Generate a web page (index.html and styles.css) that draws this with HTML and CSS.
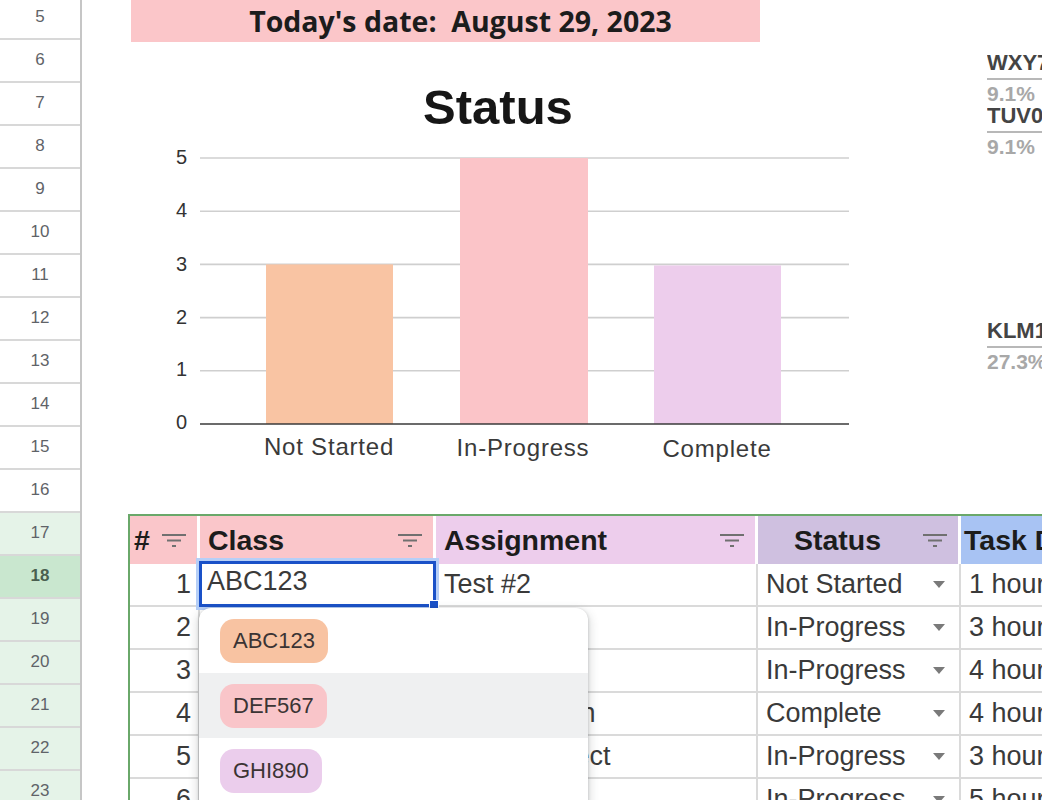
FILE: index.html
```html
<!DOCTYPE html>
<html lang="en">
<head>
<meta charset="utf-8">
<title>Assignment Tracker</title>
<link rel="stylesheet" href="styles.css">
</head>
<body>
<div class="app">
  <div class="rowhead">
    <div class="rh">5</div>
    <div class="rh">6</div>
    <div class="rh">7</div>
    <div class="rh">8</div>
    <div class="rh">9</div>
    <div class="rh">10</div>
    <div class="rh">11</div>
    <div class="rh">12</div>
    <div class="rh">13</div>
    <div class="rh">14</div>
    <div class="rh">15</div>
    <div class="rh">16</div>
    <div class="rh g">17</div>
    <div class="rh sel">18</div>
    <div class="rh g">19</div>
    <div class="rh g">20</div>
    <div class="rh g">21</div>
    <div class="rh g">22</div>
    <div class="rh g">23</div>
  </div>

  <main class="sheet">
    <section class="top">
      <div class="left">
        <div class="banner">Today's date:  August 29, 2023</div>
        <svg class="chart" viewBox="0 0 905 472" width="905" height="472">
          <text class="ct" x="416" y="82">Status</text>
          <g class="grid-lines">
            <line x1="118" y1="116" x2="767" y2="116"/>
            <line x1="118" y1="169.2" x2="767" y2="169.2"/>
            <line x1="118" y1="222.4" x2="767" y2="222.4"/>
            <line x1="118" y1="275.6" x2="767" y2="275.6"/>
            <line x1="118" y1="328.8" x2="767" y2="328.8"/>
          </g>
          <text class="yl" x="105" y="122">5</text>
          <text class="yl" x="105" y="175">4</text>
          <text class="yl" x="105" y="229">3</text>
          <text class="yl" x="105" y="282">2</text>
          <text class="yl" x="105" y="334">1</text>
          <text class="yl" x="105" y="387">0</text>
          <rect class="b-ns" x="184" y="222.4" width="127" height="159.6"/>
          <rect class="b-ip" x="378" y="116" width="128" height="266"/>
          <rect class="b-c" x="572" y="223.4" width="127" height="158.6"/>
          <line class="axis" x1="118" y1="382" x2="767" y2="382"/>
          <text class="xl" x="247" y="413">Not Started</text>
          <text class="xl" x="441" y="414">In-Progress</text>
          <text class="xl" x="635" y="415">Complete</text>
        </svg>
      </div>
      <div class="legend">
        <div class="lg-name">WXY789</div>
        <div class="lg-pct">9.1%</div>
        <div class="lg-name">TUV012</div>
        <div class="lg-pct">9.1%</div>
        <div class="lg-name far">KLM123</div>
        <div class="lg-pct">27.3%</div>
      </div>
    </section>

    <section class="tablewrap">
      <div class="grid">
        <div class="h h-pink"><span>#</span><svg class="filt" viewBox="0 0 24 14" width="24" height="14"><path d="M0 2h24M5 7.5h14M10 13h4"/></svg></div>
        <div class="h h-pink h-class"><span>Class</span><svg class="filt" viewBox="0 0 24 14" width="24" height="14"><path d="M0 2h24M5 7.5h14M10 13h4"/></svg></div>
        <div class="h h-lav h-class"><span>Assignment</span><svg class="filt" viewBox="0 0 24 14" width="24" height="14"><path d="M0 2h24M5 7.5h14M10 13h4"/></svg></div>
        <div class="h h-purp h-status"><span class="mid">Status</span><svg class="filt" viewBox="0 0 24 14" width="24" height="14"><path d="M0 2h24M5 7.5h14M10 13h4"/></svg></div>
        <div class="h h-blue h-task"><span>Task Duration</span></div>

        <div class="c num">1</div>
        <div class="c sel">ABC123</div>
        <div class="c">Test #2</div>
        <div class="c st">Not Started<i class="arrow"></i></div>
        <div class="c">1 hour</div>

        <div class="c num">2</div>
        <div class="c"></div>
        <div class="c">Quiz #3</div>
        <div class="c st">In-Progress<i class="arrow"></i></div>
        <div class="c">3 hours</div>

        <div class="c num">3</div>
        <div class="c"></div>
        <div class="c">Essay Draft</div>
        <div class="c st">In-Progress<i class="arrow"></i></div>
        <div class="c">4 hours</div>

        <div class="c num">4</div>
        <div class="c"></div>
        <div class="c">Presentation</div>
        <div class="c st">Complete<i class="arrow"></i></div>
        <div class="c">4 hours</div>

        <div class="c num">5</div>
        <div class="c"></div>
        <div class="c">Group Project</div>
        <div class="c st">In-Progress<i class="arrow"></i></div>
        <div class="c">3 hours</div>

        <div class="c num">6</div>
        <div class="c"></div>
        <div class="c">Lab Report</div>
        <div class="c st">In-Progress<i class="arrow"></i></div>
        <div class="c">5 hours</div>
      </div>

      <div class="dropdown">
        <div class="opt"><span class="chip chip-peach">ABC123</span></div>
        <div class="opt hl"><span class="chip chip-pink">DEF567</span></div>
        <div class="opt"><span class="chip chip-lav">GHI890</span></div>
      </div>
    </section>
  </main>
</div>
</body>
</html>
```

FILE: styles.css
```css
* { box-sizing: border-box; }
html, body { margin: 0; padding: 0; }
body {
  width: 1042px;
  height: 800px;
  overflow: hidden;
  background: #fff;
  font-family: "Liberation Sans", Arial, sans-serif;
}
.app { display: flex; height: 800px; }

/* row header */
.rowhead {
  width: 82px;
  flex: none;
  margin-top: -3px;
  border-right: 2px solid #c6c6c6;
  display: flex;
  flex-direction: column;
}
.rh {
  height: 43px;
  flex: none;
  border-bottom: 2px solid #d8d8d8;
  display: flex;
  align-items: center;
  justify-content: center;
  padding-bottom: 2px;
  font-size: 17px;
  color: #5f6368;
}
.rh.g { background: #e5f3e8; }
.rh.sel { background: #c9e7cf; color: #4a5f50; font-weight: bold; }

/* sheet */
.sheet { flex: 1; min-width: 0; overflow: hidden; position: relative; }
.top { display: flex; height: 514px; }
.left { width: 905px; flex: none; }
.banner {
  margin-left: 49px;
  width: 629px;
  height: 42px;
  background: #fbc6c9;
  display: flex;
  align-items: center;
  justify-content: center;
  padding-left: 30px;
  font-family: "Open Sans", "Liberation Sans", sans-serif;
  font-weight: 700;
  font-size: 28.5px;
  color: #1c1c1c;
  white-space: pre;
}
.chart { display: block; width: 905px; height: 472px; }
.chart text { font-family: "Liberation Sans", Arial, sans-serif; }
.ct { font-size: 49px; font-weight: bold; text-anchor: middle; fill: #161616; }
.grid-lines line { stroke: #cfcfcf; stroke-width: 1.6; }
.axis { stroke: #3a3a3a; stroke-width: 1.6; }
.yl { font-size: 20px; text-anchor: end; fill: #333; }
.xl { font-size: 24px; letter-spacing: 0.8px; text-anchor: middle; fill: #3a3a3a; }
.b-ns { fill: #f9c4a3; }
.b-ip { fill: #fbc4c8; }
.b-c { fill: #edcdec; }

/* pie legend (cut off) */
.legend {
  flex: 1;
  min-width: 0;
  overflow: hidden;
  padding-top: 52px;
  white-space: nowrap;
}
.lg-name {
  font-size: 22px;
  font-weight: bold;
  line-height: 22px;
  color: #444;
  padding-bottom: 4px;
  border-bottom: 2px solid #b8b8b8;
}
.lg-name.far { margin-top: 162px; }
.lg-pct {
  font-size: 21px;
  font-weight: bold;
  line-height: 22px;
  color: #a8a8a8;
  margin-top: 3px;
}

/* table */
.tablewrap { margin-left: 46px; position: relative; }
.grid {
  display: grid;
  grid-template-columns: 70px 236px 322px 203px 320px;
  width: max-content;
  border-top: 2px solid #6aa86a;
  border-left: 2px solid #6aa86a;
}
.h {
  height: 48px;
  display: flex;
  align-items: center;
  justify-content: space-between;
  padding: 0 11px 0 8px;
  border-right: 3px solid #fff;
  font-size: 28.5px;
  font-weight: bold;
  color: #1c1c1c;
  white-space: nowrap;
}
.h:first-child { padding-left: 4px; }
.h-pink { background: #fac6ca; }
.h-lav { background: #edcdec; }
.h-purp { background: #cfc0e0; }
.h-blue { background: #a8c3f3; padding-left: 3px; border-right: 0; }
.h-status .mid { flex: 1; text-align: center; padding-right: 14px; }
.filt { flex: none; }
.filt path { stroke: #707070; stroke-width: 2; fill: none; }

.c {
  height: 43px;
  display: flex;
  align-items: center;
  padding: 0 8px 0;
  border-right: 2px solid #dadada;
  border-bottom: 2px solid #dadada;
  font-size: 27px;
  color: #3a3a3a;
  white-space: nowrap;
  overflow: hidden;
}
.c.num { justify-content: flex-end; padding-right: 7px; }
.c.st { justify-content: space-between; padding-right: 14px; }
.arrow {
  width: 0;
  height: 0;
  border-left: 6px solid transparent;
  border-right: 6px solid transparent;
  border-top: 7px solid #7a7a7a;
}
.c.sel {
  position: relative;
  z-index: 2;
  overflow: visible;
  margin: -3px 0 0 -1px;
  height: 46px;
  padding-bottom: 4px;
  outline: 3px solid #1a51c8;
  outline-offset: -3px;
  box-shadow: 0 0 0 3px #b6cff7;
}
.c.sel::after {
  content: "";
  position: absolute;
  right: -5px;
  bottom: -5px;
  width: 8px;
  height: 8px;
  background: #1a51c8;
  border: 1px solid #fff;
}

/* dropdown */
.dropdown {
  position: absolute;
  left: 71px;
  top: 94px;
  width: 389px;
  height: 230px;
  background: #fff;
  border-radius: 12px;
  box-shadow: 0 1px 3px rgba(60, 64, 67, 0.3), 0 4px 8px 3px rgba(60, 64, 67, 0.15);
  overflow: hidden;
  z-index: 5;
}
.opt {
  height: 65px;
  display: flex;
  align-items: center;
  padding-left: 21px;
}
.opt.hl { background: #eff0f1; }
.chip {
  height: 44px;
  display: flex;
  align-items: center;
  padding: 0 13px;
  border-radius: 14px;
  font-size: 22px;
  color: #3b3434;
}
.chip-peach { background: #f8c3a2; }
.chip-pink { background: #f9c5c9; }
.chip-lav { background: #ebcdec; }
```
